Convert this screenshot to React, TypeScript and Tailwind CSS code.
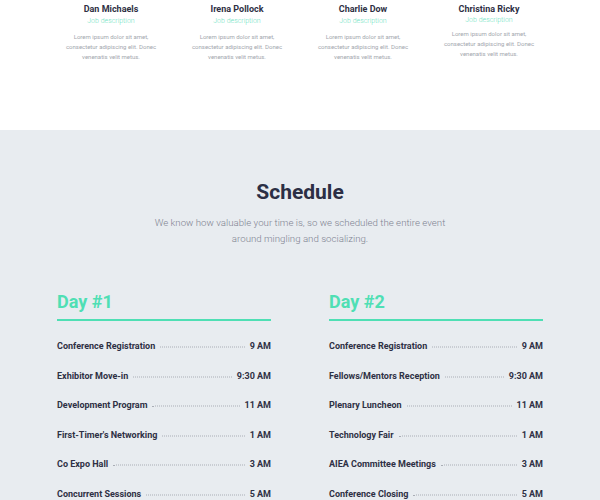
import React from "react";

const team = [
  { name: "Dan Michaels", shift: false },
  { name: "Irena Pollock", shift: false },
  { name: "Charlie Dow", shift: false },
  { name: "Christina Ricky", shift: true },
];

const day1 = [
  ["Conference Registration", "9 AM"],
  ["Exhibitor Move-in", "9:30 AM"],
  ["Development Program", "11 AM"],
  ["First-Timer's Networking", "1 AM"],
  ["Co Expo Hall", "3 AM"],
  ["Concurrent Sessions", "5 AM"],
];

const day2 = [
  ["Conference Registration", "9 AM"],
  ["Fellows/Mentors Reception", "9:30 AM"],
  ["Plenary Luncheon", "11 AM"],
  ["Technology Fair", "1 AM"],
  ["AIEA Committee Meetings", "3 AM"],
  ["Conference Closing", "5 AM"],
];

function Day({ title, rows }: { title: string; rows: string[][] }) {
  return (
    <div className="w-[214px]">
      <div className="border-b-2 border-[#4fdfb4] pb-[5px]">
        <h3 className="text-[18px] leading-[24px] font-bold text-[#4fdfb4]">{title}</h3>
      </div>
      <div className="mt-[11px]">
        {rows.map(([label, time]) => (
          <div key={label} className="flex items-center h-[29.5px] text-[9px] font-bold text-[#2e3044]">
            <span className="whitespace-nowrap">{label}</span>
            <span className="flex-1 mx-[5px] border-b border-dotted border-[#a9adb5] translate-y-[0.5px]"></span>
            <span className="whitespace-nowrap">{time}</span>
          </div>
        ))}
      </div>
    </div>
  );
}

export default function App() {
  return (
    <div className="w-[600px] h-[500px] overflow-hidden" style={{ fontFamily: "Roboto, 'Liberation Sans', sans-serif" }}>
      <section className="h-[130px] bg-white">
        <div className="ml-[48px] w-[504px] grid grid-cols-4 pt-[3px]">
          {team.map((t) => (
            <div key={t.name} className="flex flex-col items-center text-center">
              <div className="text-[9px] leading-[12px] font-bold text-[#2e3044]">{t.name}</div>
              <div className={`text-[7px] leading-[12px] font-light text-[#6fe3c2] ${t.shift ? "-mt-[1px]" : ""}`}>Job description</div>
              <div className={`text-[6px] leading-[10px] font-normal text-[#a3a7ae] ${t.shift ? "mt-[3px]" : "mt-[5px]"}`}>
                Lorem ipsum dolor sit amet,
                <br />
                consectetur adipiscing elit. Donec
                <br />
                venenatis velit metus.
              </div>
            </div>
          ))}
        </div>
      </section>
      <section className="h-[370px] bg-[#e8ecf0] pt-[48px]">
        <h2 className="text-center text-[21px] leading-[28px] font-bold text-[#2c2f45]">Schedule</h2>
        <p className="mt-[9px] text-center text-[9.7px] leading-[16px] font-light text-[#7f8391]">
          We know how valuable your time is, so we scheduled the entire event
          <br />
          around mingling and socializing.
        </p>
        <div className="mt-[43px] flex justify-center gap-[58px]">
          <Day title="Day #1" rows={day1} />
          <Day title="Day #2" rows={day2} />
        </div>
      </section>
    </div>
  );
}
